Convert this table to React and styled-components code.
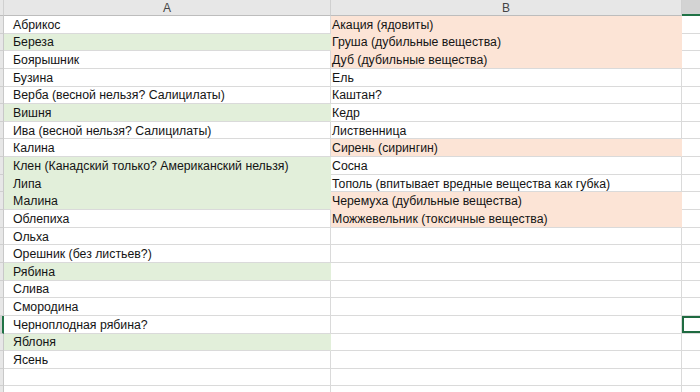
import React from "react";
import styled, { createGlobalStyle } from "styled-components";

const GlobalStyle = createGlobalStyle`
  html, body {
    margin: 0;
    padding: 0;
    background: #ffffff;
    overflow: hidden;
  }
`;

const ROW_H = 17.65;

const colA = [
  { text: "Абрикос" },
  { text: "Береза", fill: "green" },
  { text: "Боярышник" },
  { text: "Бузина" },
  { text: "Верба (весной нельзя? Салицилаты)" },
  { text: "Вишня", fill: "green" },
  { text: "Ива (весной нельзя? Салицилаты)" },
  { text: "Калина" },
  { text: "Клен (Канадский только? Американский нельзя)", fill: "green" },
  { text: "Липа", fill: "green" },
  { text: "Малина", fill: "green" },
  { text: "Облепиха" },
  { text: "Ольха" },
  { text: "Орешник (без листьев?)" },
  { text: "Рябина", fill: "green" },
  { text: "Слива" },
  { text: "Смородина" },
  { text: "Черноплодная рябина?" },
  { text: "Яблоня", fill: "green" },
  { text: "Ясень" },
  { text: "" },
  { text: "" },
];

const colB = [
  { text: "Акация (ядовиты)", fill: "pink" },
  { text: "Груша (дубильные вещества)", fill: "pink" },
  { text: "Дуб (дубильные вещества)", fill: "pink" },
  { text: "Ель" },
  { text: "Каштан?" },
  { text: "Кедр" },
  { text: "Лиственница" },
  { text: "Сирень (сирингин)", fill: "pink" },
  { text: "Сосна" },
  { text: "Тополь (впитывает вредные вещества как губка)" },
  { text: "Черемуха (дубильные вещества)", fill: "pink" },
  { text: "Можжевельник (токсичные вещества)", fill: "pink" },
];

const SELECTED_ROW = 17;

const fills = {
  green: "#e2efda",
  pink: "#fce4d6",
};

const Sheet = styled.div`
  width: 700px;
  height: 392px;
  overflow: hidden;
  font-family: "Liberation Sans", Arial, sans-serif;
  font-size: 12.3px;
  color: #141414;
`;

const Grid = styled.div`
  width: 760px;
  display: grid;
  grid-template-columns: 4px 327px 351px 1fr;
`;

const ColHeader = styled.div`
  height: 16px;
  box-sizing: border-box;
  background: ${(p) => (p.$active ? "#d3d3d3" : "#e7e7e7")};
  border-right: 1px solid #d0d0d0;
  border-bottom: ${(p) => (p.$active ? "2px solid #217346" : "1px solid #bdbdbd")};
  display: flex;
  align-items: center;
  justify-content: center;
  font-size: 12px;
  color: #444;
`;

const RowHeader = styled.div`
  height: ${ROW_H}px;
  box-sizing: border-box;
  background: ${(p) => (p.$active ? "#d3d3d3" : "#e7e7e7")};
  border-bottom: 1px solid #cfcfcf;
  border-right: ${(p) => (p.$active ? "2px solid #217346" : "1px solid #c8c8c8")};
`;

const Cell = styled.div`
  height: ${ROW_H}px;
  box-sizing: border-box;
  display: flex;
  align-items: center;
  padding-left: ${(p) => p.$indent}px;
  padding-top: 1px;
  white-space: nowrap;
  overflow: hidden;
  background: ${(p) => (p.$fill ? fills[p.$fill] : "#ffffff")};
  border-right: 1px solid ${(p) => (p.$fill ? fills[p.$fill] : "#dadada")};
  border-bottom: 1px solid
    ${(p) => (p.$fill && p.$nextFill === p.$fill ? fills[p.$fill] : "#dadada")};
  box-shadow: ${(p) => (p.$selected ? "inset 0 0 0 2px #1f6b41" : "none")};
`;

export default function App() {
  const rows = colA.map((a, i) => ({
    a,
    b: colB[i] || { text: "" },
    nextA: colA[i + 1]?.fill,
    nextB: colB[i + 1]?.fill,
  }));

  return (
    <Sheet>
      <GlobalStyle />
      <Grid>
        <ColHeader />
        <ColHeader>A</ColHeader>
        <ColHeader>B</ColHeader>
        <ColHeader $active />
        {rows.map((r, i) => (
          <React.Fragment key={i}>
            <RowHeader $active={i === SELECTED_ROW} />
            <Cell $indent={9} $fill={r.a.fill} $nextFill={r.nextA}>
              {r.a.text}
            </Cell>
            <Cell $indent={1} $fill={r.b.fill} $nextFill={r.nextB}>
              {r.b.text}
            </Cell>
            <Cell $selected={i === SELECTED_ROW} />
          </React.Fragment>
        ))}
      </Grid>
    </Sheet>
  );
}
